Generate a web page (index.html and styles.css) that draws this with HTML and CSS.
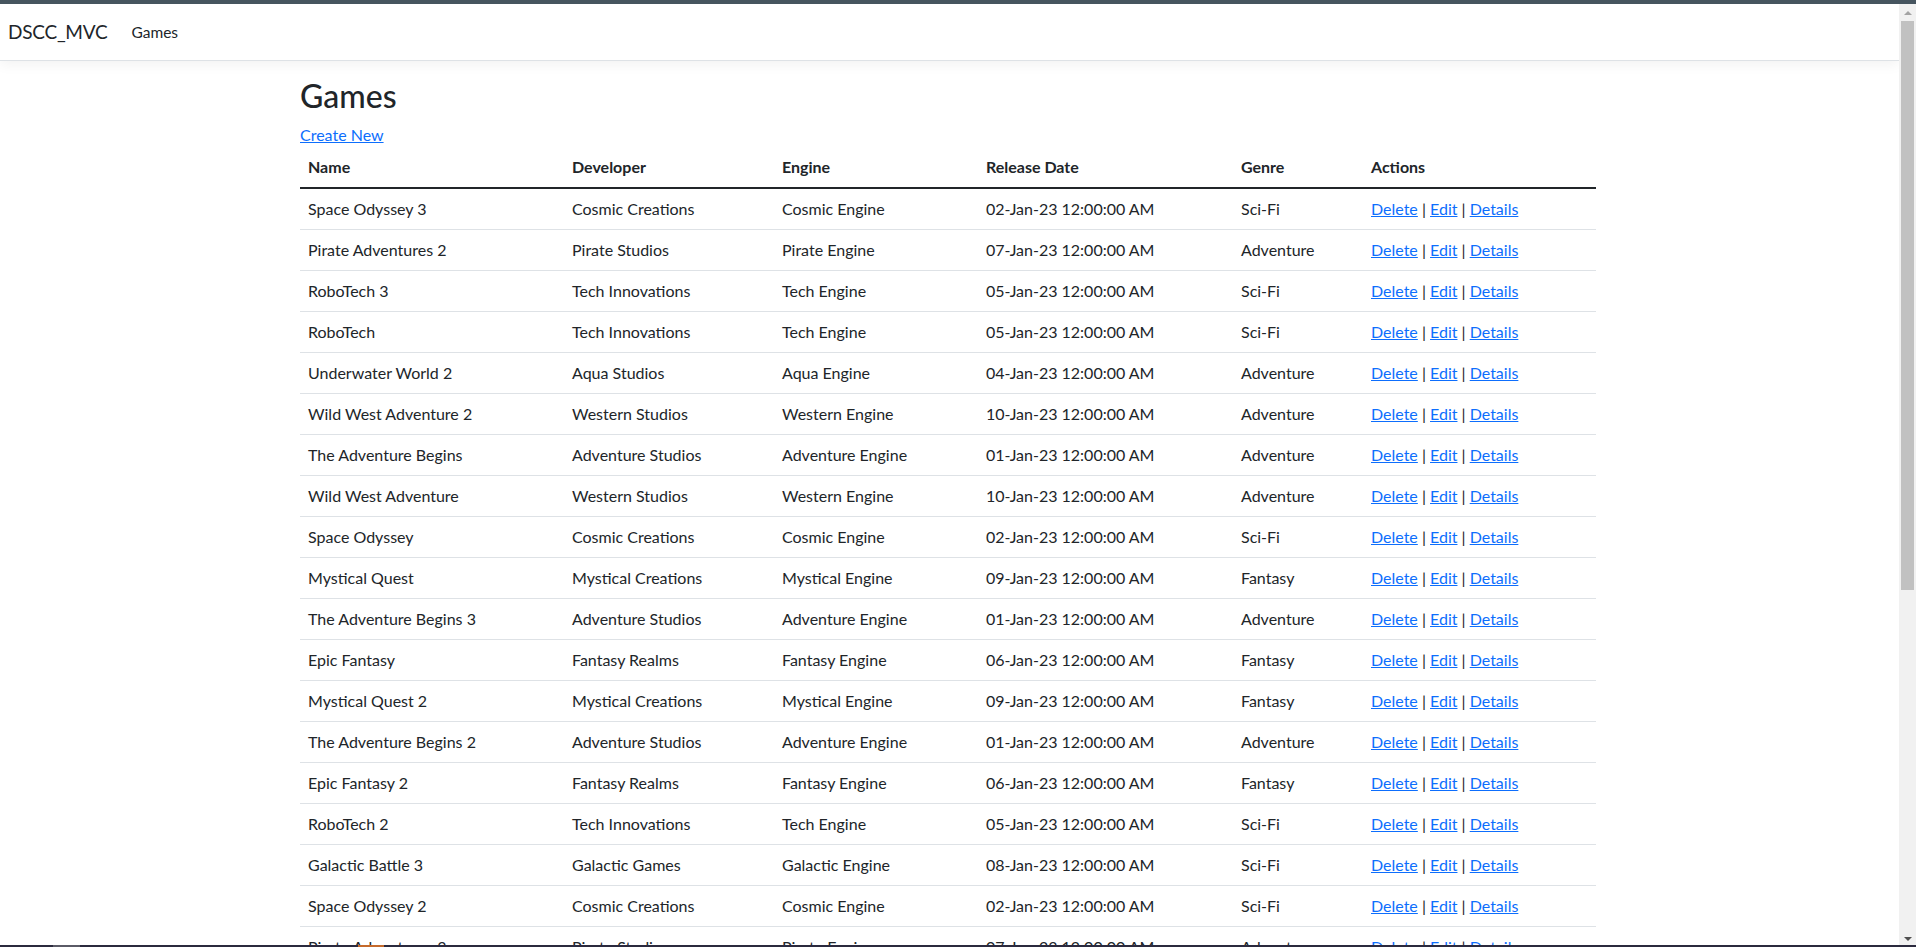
FILE: index.html
```html
<!DOCTYPE html>
<html lang="en">
<head>
<meta charset="utf-8">
<title>Index - DSCC_MVC</title>
<link rel="stylesheet" href="styles.css">
</head>
<body>
<div class="frame">
  <div class="topbar"></div>
  <div class="window">
    <div class="page">
      <header class="navbar">
        <div class="navbar-inner">
          <a class="brand" href="#">DSCC_MVC</a>
          <a class="nav-link" href="#">Games</a>
        </div>
      </header>
      <main class="container">
        <h1 class="title">Games</h1>
        <a class="create-link" href="#">Create New</a>
        <table class="table">
          <colgroup>
            <col class="c-name"><col class="c-dev"><col class="c-engine"><col class="c-date"><col class="c-genre"><col class="c-actions">
          </colgroup>
          <thead>
            <tr><th>Name</th><th>Developer</th><th>Engine</th><th>Release Date</th><th>Genre</th><th>Actions</th></tr>
          </thead>
          <tbody>
            <tr><td>Space Odyssey 3</td><td>Cosmic Creations</td><td>Cosmic Engine</td><td>02-Jan-23 12:00:00 AM</td><td>Sci-Fi</td><td><a href="#">Delete</a> | <a href="#">Edit</a> | <a href="#">Details</a></td></tr>
            <tr><td>Pirate Adventures 2</td><td>Pirate Studios</td><td>Pirate Engine</td><td>07-Jan-23 12:00:00 AM</td><td>Adventure</td><td><a href="#">Delete</a> | <a href="#">Edit</a> | <a href="#">Details</a></td></tr>
            <tr><td>RoboTech 3</td><td>Tech Innovations</td><td>Tech Engine</td><td>05-Jan-23 12:00:00 AM</td><td>Sci-Fi</td><td><a href="#">Delete</a> | <a href="#">Edit</a> | <a href="#">Details</a></td></tr>
            <tr><td>RoboTech</td><td>Tech Innovations</td><td>Tech Engine</td><td>05-Jan-23 12:00:00 AM</td><td>Sci-Fi</td><td><a href="#">Delete</a> | <a href="#">Edit</a> | <a href="#">Details</a></td></tr>
            <tr><td>Underwater World 2</td><td>Aqua Studios</td><td>Aqua Engine</td><td>04-Jan-23 12:00:00 AM</td><td>Adventure</td><td><a href="#">Delete</a> | <a href="#">Edit</a> | <a href="#">Details</a></td></tr>
            <tr><td>Wild West Adventure 2</td><td>Western Studios</td><td>Western Engine</td><td>10-Jan-23 12:00:00 AM</td><td>Adventure</td><td><a href="#">Delete</a> | <a href="#">Edit</a> | <a href="#">Details</a></td></tr>
            <tr><td>The Adventure Begins</td><td>Adventure Studios</td><td>Adventure Engine</td><td>01-Jan-23 12:00:00 AM</td><td>Adventure</td><td><a href="#">Delete</a> | <a href="#">Edit</a> | <a href="#">Details</a></td></tr>
            <tr><td>Wild West Adventure</td><td>Western Studios</td><td>Western Engine</td><td>10-Jan-23 12:00:00 AM</td><td>Adventure</td><td><a href="#">Delete</a> | <a href="#">Edit</a> | <a href="#">Details</a></td></tr>
            <tr><td>Space Odyssey</td><td>Cosmic Creations</td><td>Cosmic Engine</td><td>02-Jan-23 12:00:00 AM</td><td>Sci-Fi</td><td><a href="#">Delete</a> | <a href="#">Edit</a> | <a href="#">Details</a></td></tr>
            <tr><td>Mystical Quest</td><td>Mystical Creations</td><td>Mystical Engine</td><td>09-Jan-23 12:00:00 AM</td><td>Fantasy</td><td><a href="#">Delete</a> | <a href="#">Edit</a> | <a href="#">Details</a></td></tr>
            <tr><td>The Adventure Begins 3</td><td>Adventure Studios</td><td>Adventure Engine</td><td>01-Jan-23 12:00:00 AM</td><td>Adventure</td><td><a href="#">Delete</a> | <a href="#">Edit</a> | <a href="#">Details</a></td></tr>
            <tr><td>Epic Fantasy</td><td>Fantasy Realms</td><td>Fantasy Engine</td><td>06-Jan-23 12:00:00 AM</td><td>Fantasy</td><td><a href="#">Delete</a> | <a href="#">Edit</a> | <a href="#">Details</a></td></tr>
            <tr><td>Mystical Quest 2</td><td>Mystical Creations</td><td>Mystical Engine</td><td>09-Jan-23 12:00:00 AM</td><td>Fantasy</td><td><a href="#">Delete</a> | <a href="#">Edit</a> | <a href="#">Details</a></td></tr>
            <tr><td>The Adventure Begins 2</td><td>Adventure Studios</td><td>Adventure Engine</td><td>01-Jan-23 12:00:00 AM</td><td>Adventure</td><td><a href="#">Delete</a> | <a href="#">Edit</a> | <a href="#">Details</a></td></tr>
            <tr><td>Epic Fantasy 2</td><td>Fantasy Realms</td><td>Fantasy Engine</td><td>06-Jan-23 12:00:00 AM</td><td>Fantasy</td><td><a href="#">Delete</a> | <a href="#">Edit</a> | <a href="#">Details</a></td></tr>
            <tr><td>RoboTech 2</td><td>Tech Innovations</td><td>Tech Engine</td><td>05-Jan-23 12:00:00 AM</td><td>Sci-Fi</td><td><a href="#">Delete</a> | <a href="#">Edit</a> | <a href="#">Details</a></td></tr>
            <tr><td>Galactic Battle 3</td><td>Galactic Games</td><td>Galactic Engine</td><td>08-Jan-23 12:00:00 AM</td><td>Sci-Fi</td><td><a href="#">Delete</a> | <a href="#">Edit</a> | <a href="#">Details</a></td></tr>
            <tr><td>Space Odyssey 2</td><td>Cosmic Creations</td><td>Cosmic Engine</td><td>02-Jan-23 12:00:00 AM</td><td>Sci-Fi</td><td><a href="#">Delete</a> | <a href="#">Edit</a> | <a href="#">Details</a></td></tr>
            <tr><td>Pirate Adventures 3</td><td>Pirate Studios</td><td>Pirate Engine</td><td>07-Jan-23 12:00:00 AM</td><td>Adventure</td><td><a href="#">Delete</a> | <a href="#">Edit</a> | <a href="#">Details</a></td></tr>
            <tr><td>Underwater World</td><td>Aqua Studios</td><td>Aqua Engine</td><td>04-Jan-23 12:00:00 AM</td><td>Adventure</td><td><a href="#">Delete</a> | <a href="#">Edit</a> | <a href="#">Details</a></td></tr>
          </tbody>
        </table>
      </main>
    </div>
    <div class="scrollbar">
      <div class="sb-btn"><span class="arrow-up"></span></div>
      <div class="sb-track"><div class="sb-thumb"></div></div>
      <div class="sb-btn"><span class="arrow-down"></span></div>
    </div>
  </div>
</div>
<div class="taskbar">
  <span class="tb-seg tb-gray"></span>
  <span class="tb-seg tb-orange"></span>
</div>
</body>
</html>
```

FILE: styles.css
```css
* { box-sizing: border-box; }

html, body {
  margin: 0;
  height: 100%;
  overflow: hidden;
  background: #fff;
}

body {
  font-family: Lato, "Open Sans", "Liberation Sans", sans-serif;
  font-size: 16px;
  line-height: 1.5;
  color: #212529;
}

.frame {
  display: flex;
  flex-direction: column;
  height: 100vh;
}

.topbar {
  height: 4px;
  flex: none;
  background: #46555f;
}

.window {
  flex: 1;
  min-height: 0;
  display: flex;
}

.page {
  flex: 1;
  min-width: 0;
  overflow: hidden;
  padding-right: 3px;
}

/* navbar */
.navbar {
  background: #fff;
  border-bottom: 1px solid #dee2e6;
  box-shadow: 0 4px 12px rgba(0, 0, 0, 0.05);
  padding: 8px 0;
  margin-right: -3px;
  position: relative;
}

.navbar-inner {
  display: flex;
  align-items: center;
  padding: 0 8px;
}

.brand {
  font-size: 19px;
  line-height: 30px;
  padding: 5px 0;
  margin-right: 16px;
  color: #212529;
  text-decoration: none;
  letter-spacing: -0.25px;
}

.nav-link {
  padding: 8px;
  font-size: 15.5px;
  line-height: 24px;
  color: #212529;
  text-decoration: none;
}

/* content */
.container {
  width: 1320px;
  margin: 16px auto 0;
  padding: 0 12px;
}

.title {
  font-size: 32px;
  font-weight: 500;
  line-height: 1.2;
  margin: 0 0 8px;
}

.create-link {
  display: block;
  width: max-content;
  color: #0d6efd;
  text-decoration: underline;
  line-height: 24px;
}

.table {
  width: 100%;
  border-collapse: collapse;
  table-layout: fixed;
  margin-bottom: 16px;
}

.c-name { width: 264px; }
.c-dev { width: 210px; }
.c-engine { width: 204px; }
.c-date { width: 255px; }
.c-genre { width: 130px; }
.c-actions { width: 233px; }

.table th,
.table td {
  padding: 8px;
  text-align: left;
  vertical-align: top;
  border-bottom: 1px solid #dee2e6;
  white-space: nowrap;
}

.table th {
  font-weight: 700;
}

.table tbody {
  border-top: 2px solid #212529;
}

.table td a {
  color: #0d6efd;
  text-decoration: underline;
}

/* fake scrollbar */
.scrollbar {
  width: 17px;
  flex: none;
  background: #f1f1f1;
  display: flex;
  flex-direction: column;
  position: relative;
}

.sb-btn {
  height: 17px;
  flex: none;
  display: flex;
  align-items: center;
  justify-content: center;
}

.sb-track {
  flex: 1;
  padding: 0 2px;
}

.sb-thumb {
  height: 569px;
  background: #c1c1c1;
}

.arrow-up {
  width: 0;
  height: 0;
  border-left: 4px solid transparent;
  border-right: 4px solid transparent;
  border-bottom: 4px solid #a3a3a3;
}

.arrow-down {
  width: 0;
  height: 0;
  border-left: 4px solid transparent;
  border-right: 4px solid transparent;
  border-top: 4px solid #505050;
}

/* strip at the very bottom */
.taskbar {
  position: fixed;
  left: 0;
  right: 0;
  bottom: 0;
  height: 2px;
  background: #2b2a3e;
  display: flex;
}

.tb-seg {
  height: 2px;
  display: block;
}

.tb-gray {
  width: 27px;
  margin-left: 53px;
  background: #5a5a66;
}

.tb-orange {
  width: 26px;
  margin-left: 278px;
  background: #c46a2c;
}
```
